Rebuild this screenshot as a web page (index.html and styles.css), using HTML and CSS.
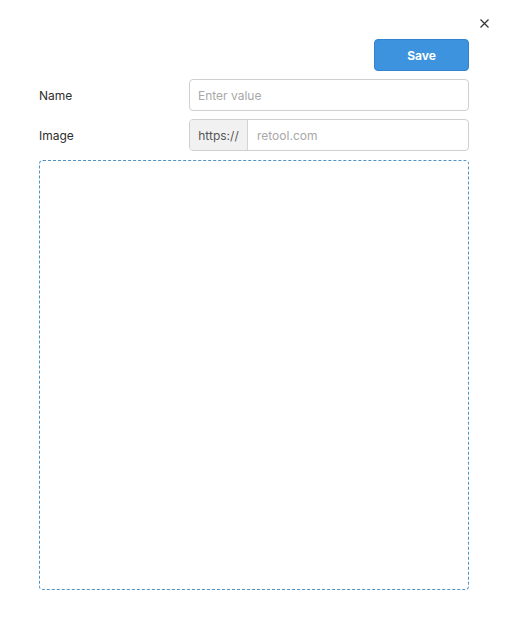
FILE: index.html
```html
<!DOCTYPE html>
<html>
<head>
<meta charset="utf-8">
<link rel="stylesheet" href="styles.css">
</head>
<body>
<div class="modal">
  <div class="topbar">
    <button class="close" aria-label="Close">
      <svg width="9" height="9" viewBox="0 0 9 9"><path d="M0.5 0.5 L8.5 8.5 M8.5 0.5 L0.5 8.5" stroke="#333" stroke-width="1.2" fill="none"/></svg>
    </button>
  </div>
  <div class="actions">
    <button class="save">Save</button>
  </div>
  <div class="row">
    <label class="label">Name</label>
    <div class="input"><span class="placeholder">Enter value</span></div>
  </div>
  <div class="row">
    <label class="label">Image</label>
    <div class="input group">
      <span class="prefix">https://</span>
      <span class="placeholder">retool.com</span>
    </div>
  </div>
  <div class="dropzone"></div>
</div>
</body>
</html>
```
FILE: styles.css
```css
html, body {
  margin: 0;
  padding: 0;
  background: #fff;
}
body {
  font-family: Inter, "Noto Sans", sans-serif;
  font-size: 12px;
  color: #333;
}
.modal {
  width: 507px;
  height: 628px;
  box-sizing: border-box;
  padding: 0 38px 0 39px;
  display: flex;
  flex-direction: column;
}
.topbar {
  height: 39px;
  display: flex;
  justify-content: flex-end;
  align-items: flex-start;
  margin-right: -20px;
}
.close {
  margin-top: 19px;
  padding: 0;
  border: 0;
  background: none;
  width: 9px;
  height: 9px;
  display: flex;
  cursor: pointer;
}
.actions {
  display: flex;
  justify-content: flex-end;
  margin-bottom: 8px;
}
.save {
  width: 95px;
  height: 32px;
  border: 1px solid #2f83cf;
  border-radius: 4px;
  background: #3d93de;
  color: #fff;
  font-family: Inter, "Noto Sans", sans-serif;
  font-weight: 700;
  font-size: 12px;
  padding: 0;
}
.row {
  display: grid;
  grid-template-columns: 150px 1fr;
  align-items: center;
  margin-bottom: 8px;
}
.label {
  color: #2e2e2e;
  font-size: 12px;
}
.input {
  height: 32px;
  box-sizing: border-box;
  border: 1px solid #cfcfcf;
  border-radius: 4px;
  display: flex;
  align-items: center;
  padding: 0 8px;
  overflow: hidden;
}
.input.group {
  padding: 0;
}
.prefix {
  height: 100%;
  width: 58px;
  box-sizing: border-box;
  display: flex;
  align-items: center;
  justify-content: center;
  background: #f1f1f1;
  border-right: 1px solid #d4d4d4;
  color: #555;
}
.group .placeholder {
  padding-left: 9px;
}
.placeholder {
  color: #a8a8a8;
}
.dropzone {
  margin-top: 1px;
  height: 430px;
  box-sizing: border-box;
  border: 1px dashed #4f93c6;
  border-radius: 4px;
}
```
